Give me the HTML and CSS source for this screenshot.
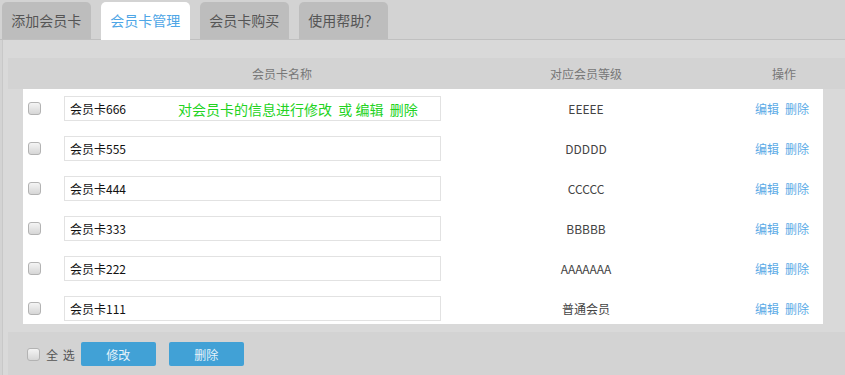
FILE: index.html
```html
<!DOCTYPE html>
<html lang="zh-CN">
<head>
	<meta charset="UTF-8">
	<title>会员卡管理</title>
	<link rel="stylesheet" href="styles.css">
</head>
<body>
<div class="tabs">
	<div class="tab">添加会员卡</div>
	<div class="tab active">会员卡管理</div>
	<div class="tab">会员卡购买</div>
	<div class="tab">使用帮助？</div>
</div>
<div class="panel">
	<div class="thead">
		<div></div>
		<div class="th">会员卡名称</div>
		<div class="th">对应会员等级</div>
		<div class="th op">操作</div>
	</div>
	<div class="tbody">
		<div class="row">
			<div class="cell-check"><input type="checkbox" class="chk"></div>
			<div class="cell-name">
				<input type="text" class="name" value="会员卡666">
				<span class="tip">对会员卡的信息进行修改&nbsp; 或 编辑&nbsp; 删除</span>
			</div>
			<div class="cell-level">EEEEE</div>
			<div class="cell-op"><a href="#">编辑</a><a href="#">删除</a></div>
		</div>
		<div class="row">
			<div class="cell-check"><input type="checkbox" class="chk"></div>
			<div class="cell-name"><input type="text" class="name" value="会员卡555"></div>
			<div class="cell-level">DDDDD</div>
			<div class="cell-op"><a href="#">编辑</a><a href="#">删除</a></div>
		</div>
		<div class="row">
			<div class="cell-check"><input type="checkbox" class="chk"></div>
			<div class="cell-name"><input type="text" class="name" value="会员卡444"></div>
			<div class="cell-level">CCCCC</div>
			<div class="cell-op"><a href="#">编辑</a><a href="#">删除</a></div>
		</div>
		<div class="row">
			<div class="cell-check"><input type="checkbox" class="chk"></div>
			<div class="cell-name"><input type="text" class="name" value="会员卡333"></div>
			<div class="cell-level">BBBBB</div>
			<div class="cell-op"><a href="#">编辑</a><a href="#">删除</a></div>
		</div>
		<div class="row">
			<div class="cell-check"><input type="checkbox" class="chk"></div>
			<div class="cell-name"><input type="text" class="name" value="会员卡222"></div>
			<div class="cell-level">AAAAAAA</div>
			<div class="cell-op"><a href="#">编辑</a><a href="#">删除</a></div>
		</div>
		<div class="row">
			<div class="cell-check"><input type="checkbox" class="chk"></div>
			<div class="cell-name"><input type="text" class="name" value="会员卡111"></div>
			<div class="cell-level">普通会员</div>
			<div class="cell-op"><a href="#">编辑</a><a href="#">删除</a></div>
		</div>
	</div>
	<div class="tfoot">
		<label class="all"><input type="checkbox" class="chk">全 选</label>
		<button class="btn">修改</button>
		<button class="btn">删除</button>
	</div>
</div>
</body>
</html>
```

FILE: styles.css
```css
*{
	box-sizing: border-box;
}
body{
	margin: 0;
	background-color: #d3d3d3;
	font-family: "Noto Sans CJK SC", "Noto Sans", sans-serif;
	overflow: hidden;
}

/* 탭 */
.tabs{
	display: flex;
	gap: 10.5px;
	height: 40px;
	padding: 2px 0 0 2px;
	border-bottom: 1px solid #c0c0c0;
}
.tab{
	width: 88.5px;
	height: 37px;
	line-height: 37px;
	text-align: center;
	font-size: 14px;
	color: #555;
	background-color: #bdbdbd;
	border-radius: 5px 5px 0 0;
}
.tab.active{
	height: 38px;
	background-color: #fff;
	color: #4ea6e6;
	margin-bottom: -1px;
}

.panel{
	margin-left: 2px;
	border-left: 1px solid #c8c8c8;
	background-color: #d9d9d9;
	padding-top: 18px;
	height: 335px;
}

/* 표 머리 */
.thead{
	display: grid;
	grid-template-columns: 56px 436px 172px 1fr;
	margin-left: 5px;
	height: 31px;
	background-color: #d3d3d3;
	font-size: 12px;
	color: #777;
}
.th{
	line-height: 31px;
	text-align: center;
}
.th.op{
	text-align: left;
	padding-left: 100px;
}

/* 표 몸통 */
.tbody{
	margin-left: 20px;
	width: 800px;
	background-color: #fff;
}
.row{
	display: grid;
	grid-template-columns: 41px 377px 290px 92px;
	align-items: center;
	height: 40px;
	padding-bottom: 2px;
	font-size: 12px;
}
.row:last-child{
	height: 35px;
	padding-bottom: 0;
	padding-top: 3px;
}
.cell-check{
	padding-left: 5px;
	display: flex;
}
.chk{
	appearance: none;
	margin: 0;
	width: 13px;
	height: 13px;
	border: 1px solid #b3b3b3;
	border-radius: 3px;
	background: linear-gradient(#f4f4f4, #d6d6d6);
}
.cell-name{
	position: relative;
	display: flex;
}
.name{
	width: 378px;
	height: 25px;
	border: 1px solid #e2e2e2;
	padding: 0 5px;
	font-family: inherit;
	font-size: 12px;
	color: #111;
	outline: none;
}
.tip{
	position: absolute;
	left: 114px;
	top: 3px;
	font-size: 14px;
	color: #22d322;
	white-space: nowrap;
}
.cell-level{
	text-align: center;
	color: #444;
}
.cell-op{
	text-align: right;
	padding-right: 14px;
}
.cell-op a{
	color: #5aaae6;
	text-decoration: none;
	margin-left: 6px;
}

/* 아래쪽 */
.tfoot{
	display: flex;
	align-items: center;
	margin: 8px 0 0 5px;
	height: 43px;
	padding: 1px 0 0 19px;
	background-color: #d3d3d3;
}
.all{
	display: flex;
	align-items: center;
	gap: 6px;
	font-size: 12px;
	color: #555;
	letter-spacing: 1px;
	margin-right: 5px;
}
.btn{
	width: 75px;
	height: 24px;
	margin-right: 13px;
	border: none;
	border-radius: 2px;
	background-color: #41a1d6;
	color: #e6f3fb;
	font-family: inherit;
	font-size: 12px;
}
```
